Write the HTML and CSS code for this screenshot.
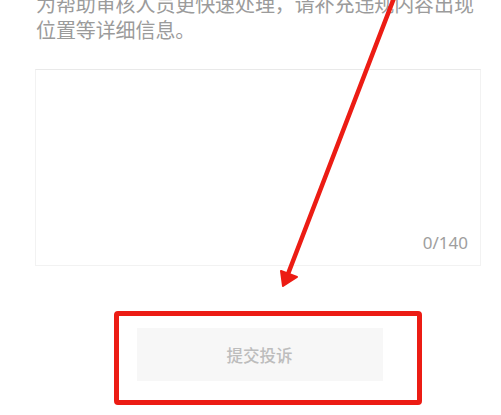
FILE: index.html
```html
<!DOCTYPE html>
<html lang="zh-CN">
<head>
<meta charset="utf-8">
<title>投诉</title>
<link rel="stylesheet" href="styles.css">
</head>
<body>
<main class="page">
  <p class="hint">为帮助审核人员更快速处理，请补充违规内容出现位置等详细信息。</p>
  <div class="input-box">
    <div class="counter">0/140</div>
  </div>
  <div class="actions">
    <div class="btn-wrap">
      <button class="submit" type="button">提交投诉</button>
      <div class="mark"></div>
    </div>
  </div>
</main>
<svg class="arrow" width="501" height="415" viewBox="0 0 501 415" aria-hidden="true">
  <line x1="394" y1="-2" x2="288" y2="274" stroke="#ec1c14" stroke-width="4.5" stroke-linecap="round"/>
  <polygon points="283,286 281,271 297,277" fill="#ec1c14" stroke="#ec1c14" stroke-width="2" stroke-linejoin="round"/>
</svg>
</body>
</html>
```

FILE: styles.css
```css
html, body {
  margin: 0;
  padding: 0;
  background: #ffffff;
}

body {
  width: 501px;
  height: 415px;
  overflow: hidden;
  position: relative;
  font-family: "Noto Sans CJK SC", "Noto Sans", sans-serif;
}

.page {
  padding: 0 20px 0 35px;
}

.hint {
  margin: -9px 0 0 1px;
  font-size: 20px;
  line-height: 26px;
  color: #9b9b9b;
  letter-spacing: -0.1px;
}

.input-box {
  margin-top: 26px;
  height: 197px;
  border: 1px solid #f2f2f2;
  border-top-color: #e9e9e9;
  display: flex;
  align-items: flex-end;
  justify-content: flex-end;
  box-sizing: border-box;
  padding: 0 12px 12px 0;
}

.counter {
  font-family: "Noto Sans", sans-serif;
  font-size: 17px;
  line-height: 20px;
  color: #9e9e9e;
}

.actions {
  display: flex;
  justify-content: center;
  margin-top: 62px;
  padding-left: 3px;
}

.btn-wrap {
  position: relative;
}

.submit {
  display: block;
  width: 246px;
  height: 53px;
  border: none;
  background: #f7f7f7;
  color: #bdbdbd;
  font-family: "Noto Sans CJK SC", sans-serif;
  font-size: 16.5px;
  font-weight: 500;
  padding: 0;
}

.mark {
  position: absolute;
  left: -23px;
  top: -17px;
  width: 308px;
  height: 94px;
  box-sizing: border-box;
  border: 5px solid #ec1c14;
  border-radius: 4px;
}

.arrow {
  position: absolute;
  left: 0;
  top: 0;
  pointer-events: none;
}
```
